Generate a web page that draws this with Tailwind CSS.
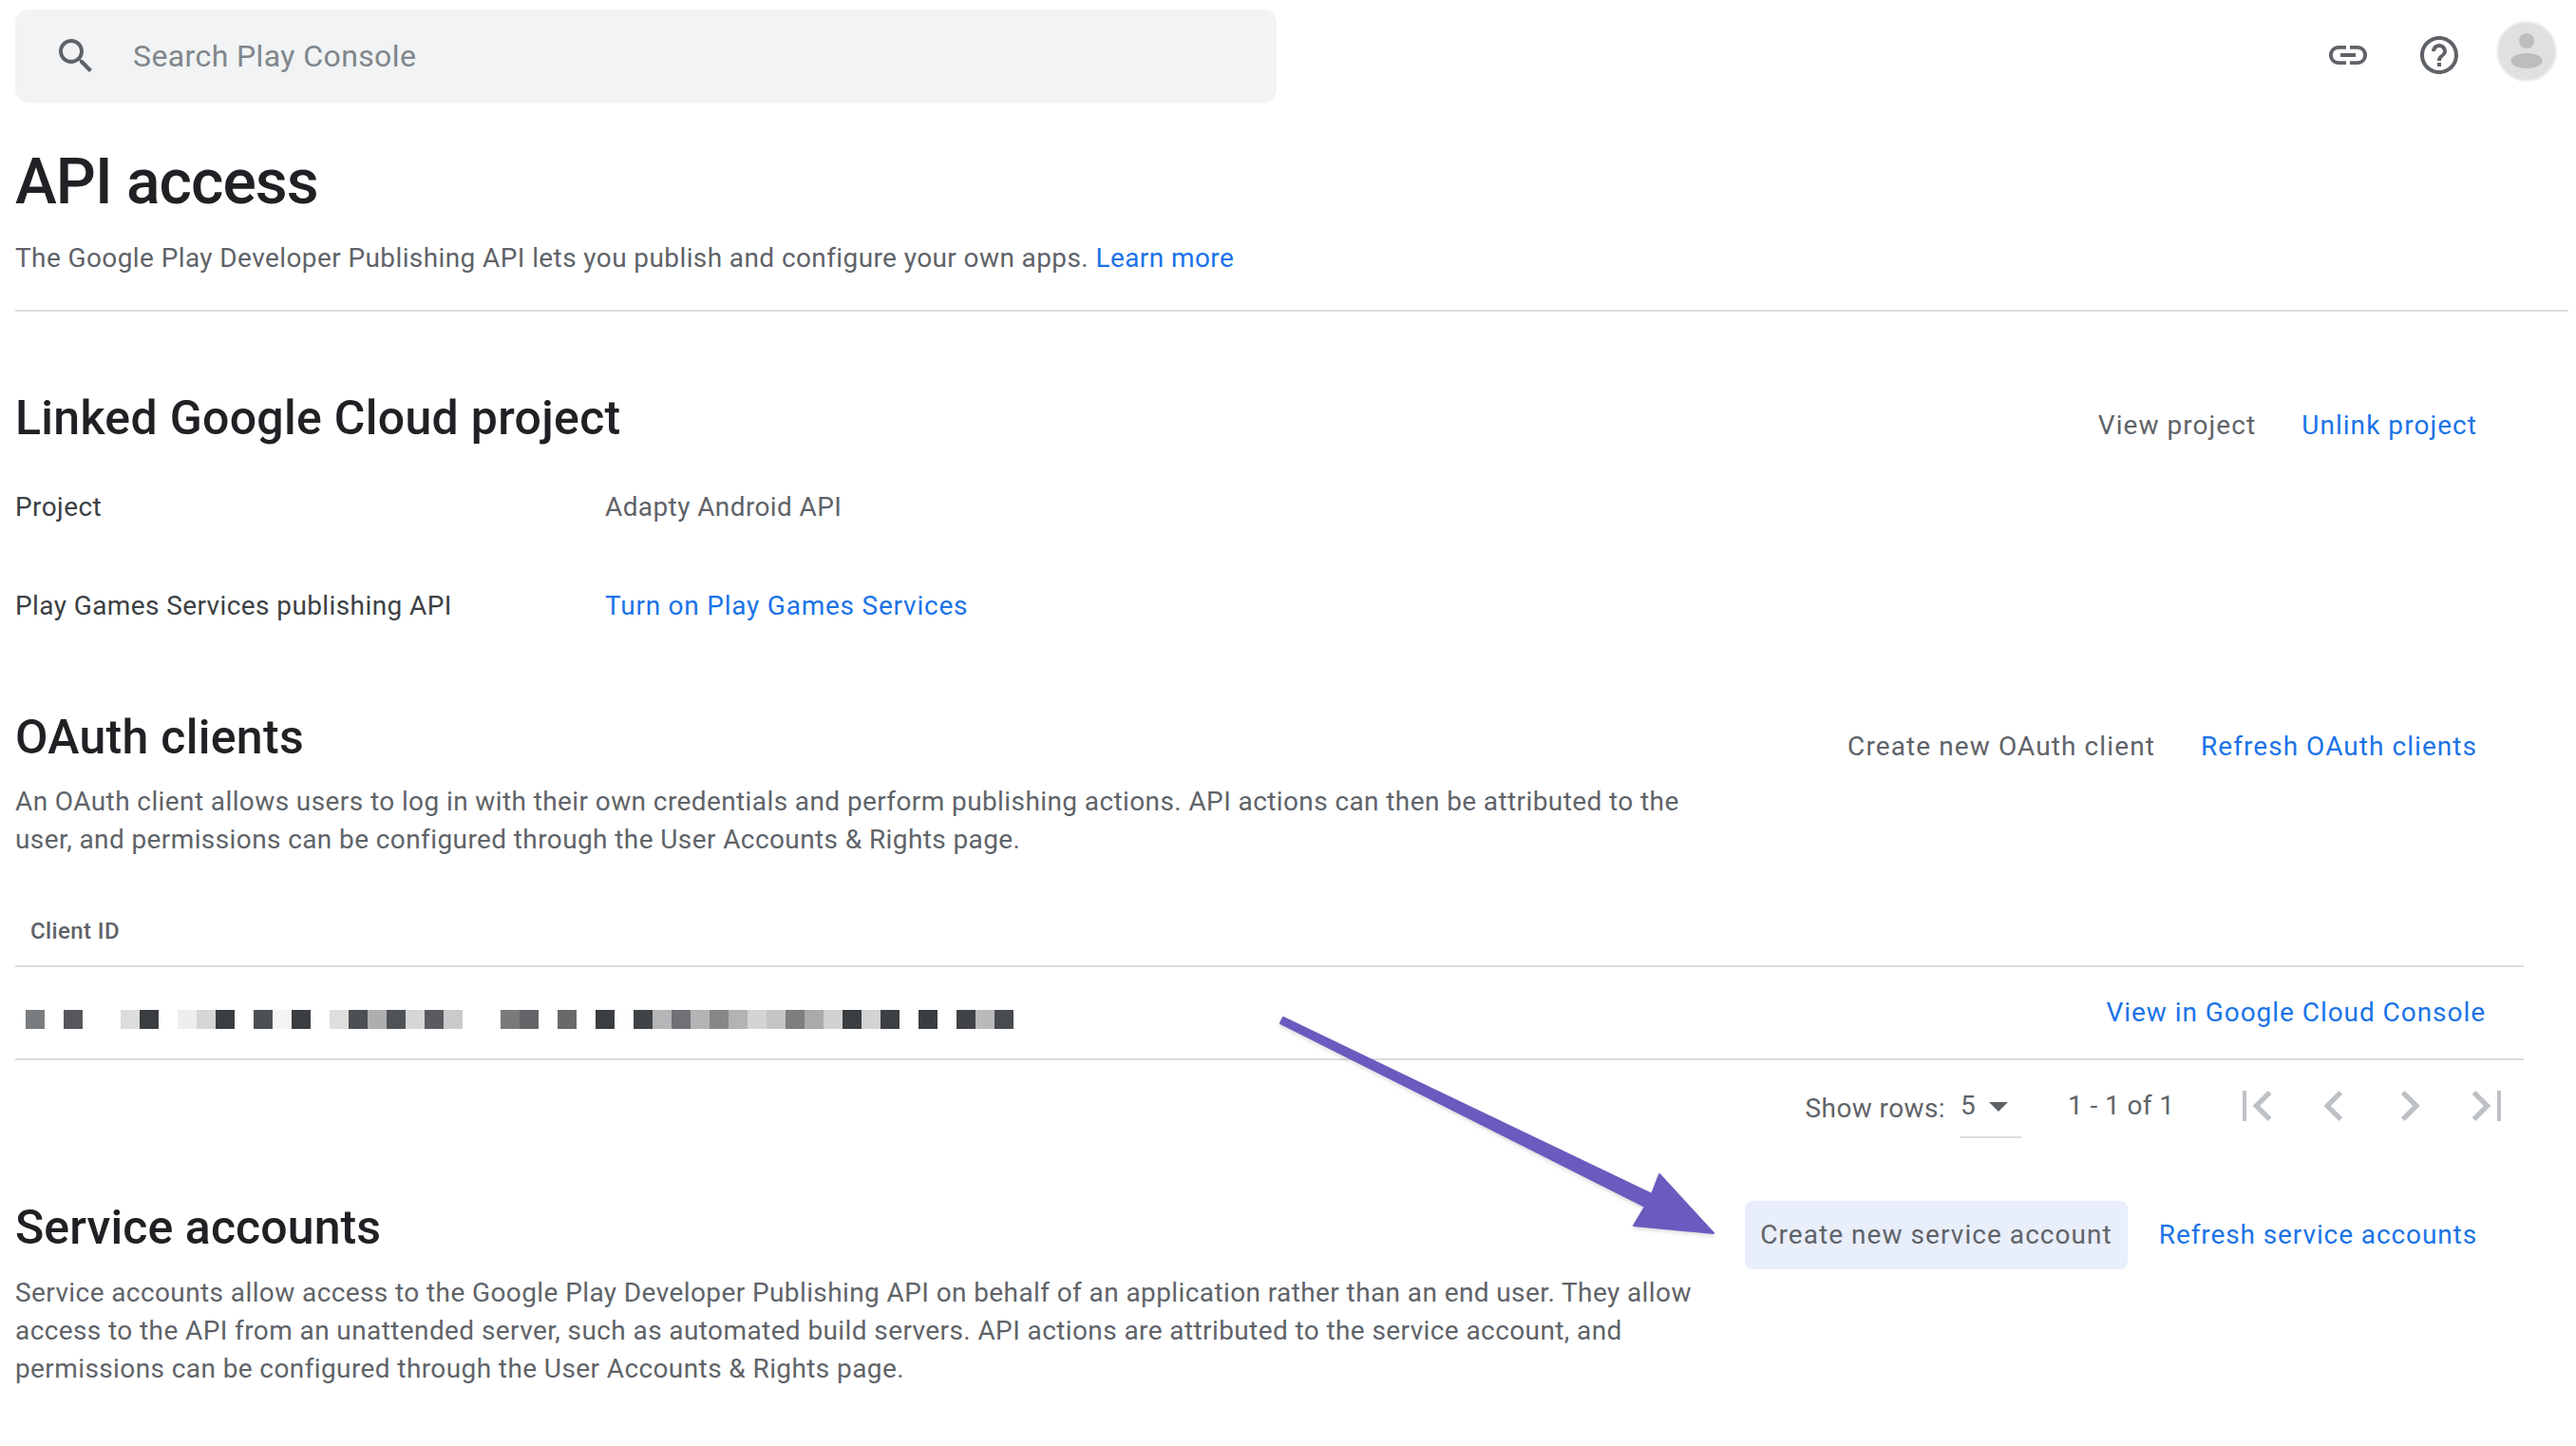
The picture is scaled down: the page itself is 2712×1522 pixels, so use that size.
<!doctype html>
<html lang="en">
<head>
<meta charset="utf-8">
<title>API access</title>
<script src="https://cdn.jsdelivr.net/npm/@tailwindcss/browser@4"></script>
</head>
<body class="bg-white font-['Roboto',sans-serif] text-[28px] tracking-[0.4px] text-[#5f6368]">
<div class="relative w-[2712px] h-[1522px] overflow-hidden pl-4 pr-2">

  <header class="h-[118px] pt-[10px] flex items-start">
    <div class="w-[1328px] h-[98px] rounded-[14px] bg-[#f1f3f4] flex items-center pl-10 gap-9">
      <svg class="w-12 h-12 fill-[#5f6368]" viewBox="0 0 24 24"><path d="M15.5 14h-.79l-.28-.27C15.41 12.59 16 11.11 16 9.5 16 5.91 13.09 3 9.5 3S3 5.91 3 9.5 5.91 16 9.5 16c1.61 0 3.09-.59 4.23-1.57l.27.28v.79l5 4.99L20.49 19l-4.99-5zm-6 0C7.01 14 5 11.99 5 9.5S7.01 5 9.5 5 14 7.01 14 9.5 11.99 14 9.5 14z"/></svg>
      <span class="text-[32px] tracking-[0.4px] text-[#80868b]">Search Play Console</span>
    </div>
    <div class="ml-auto flex items-center pr-[12px] pt-[20px]">
      <svg class="w-12 h-12 fill-[#5f6368]" viewBox="0 0 24 24"><path d="M3.9 12c0-1.71 1.39-3.1 3.1-3.1h4V7H7c-2.76 0-5 2.24-5 5s2.24 5 5 5h4v-1.9H7c-1.71 0-3.1-1.39-3.1-3.1zM8 13h8v-2H8v2zm9-6h-4v1.9h4c1.71 0 3.1 1.39 3.1 3.1s-1.39 3.1-3.1 3.1h-4V17h4c2.76 0 5-2.24 5-5s-2.24-5-5-5z"/></svg>
      <svg class="w-12 h-12 ml-12 fill-[#5f6368]" viewBox="0 0 24 24"><path d="M11 18h2v-2h-2v2zm1-16C6.48 2 2 6.48 2 12s4.48 10 10 10 10-4.48 10-10S17.52 2 12 2zm0 18c-4.41 0-8-3.59-8-8s3.59-8 8-8 8 3.59 8 8-3.59 8-8 8zm0-14c-2.21 0-4 1.79-4 4h2c0-1.1.9-2 2-2s2 .9 2 2c0 2-3 1.75-3 5h2c0-2.25 3-2.5 3-5 0-2.21-1.79-4-4-4z"/></svg>
      <svg class="w-16 h-16 ml-9 -mt-2" viewBox="0 0 64 64"><circle cx="32" cy="32" r="31" fill="#e0e0e0" stroke="#eeeeee" stroke-width="2"/><circle cx="32" cy="21" r="8" fill="#bdbdbd"/><ellipse cx="32" cy="42" rx="16.500" ry="8" fill="#bdbdbd"/></svg>
    </div>
  </header>

  <h1 class="h-[88px] leading-[88px] mt-[30px] text-[66px] font-medium text-[#202124] tracking-[-1px]">API access</h1>
  <p class="h-10 leading-10 mt-[16px] text-[#5f6368]">The Google Play Developer Publishing API lets you publish and configure your own apps. <span class="text-[#1a73e8]">Learn more</span></p>
  <div class="mt-[34px] h-[2px] bg-[#dadce0]"></div>

  <section class="flex items-start justify-between pr-[96px] mt-[79px]">
    <h2 class="h-[66px] leading-[66px] text-[50px] font-medium tracking-[0.3px] text-[#202124]">Linked Google Cloud project</h2>
    <div class="flex gap-12 pt-[21px] leading-10 tracking-[1.05px]"><span>View project</span><span class="text-[#1a73e8]">Unlink project</span></div>
  </section>
  <div class="flex h-10 leading-10 mt-[41px]"><span class="w-[621px] text-[#3c4043]">Project</span><span>Adapty Android API</span></div>
  <div class="flex h-10 leading-10 mt-[64px]"><span class="w-[621px] text-[#3c4043]">Play Games Services publishing API</span><span class="text-[#1a73e8] tracking-[0.77px]">Turn on Play Games Services</span></div>

  <section class="flex items-start justify-between pr-[96px] mt-[85px]">
    <h2 class="h-[66px] leading-[66px] text-[50px] font-medium tracking-[0.3px] text-[#202124]">OAuth clients</h2>
    <div class="flex gap-12 pt-[23px] leading-10 tracking-[1.1px]"><span>Create new OAuth client</span><span class="text-[#1a73e8] tracking-[1.05px]">Refresh OAuth clients</span></div>
  </section>
  <p class="w-[1790px] leading-10 mt-[15px]">An OAuth client allows users to log in with their own credentials and perform publishing actions. API actions can then be attributed to the user, and permissions can be configured through the User Accounts &amp; Rights page.</p>

  <div class="w-[2641px] mt-[55px]">
    <div class="h-[42px] pl-4 flex items-center text-[24px] font-medium text-[#5f6368]">Client ID</div>
    <div class="h-[2px] bg-[#dadce0] mt-[15px]"></div>
    <div class="h-[96px] flex items-start justify-between pl-[11px] pr-[40px] pt-[28px]">
      <div class="flex mt-[17px]">
        <i class="block w-5 h-5 bg-[#7a7d80]"></i><i class="block w-5 h-5"></i><i class="block w-5 h-5 bg-[#57585c]"></i><i class="block w-5 h-5"></i><i class="block w-5 h-5"></i><i class="block w-5 h-5 bg-[#dcdedd]"></i><i class="block w-5 h-5 bg-[#3b3e41]"></i><i class="block w-5 h-5"></i><i class="block w-5 h-5 bg-[#edefee]"></i><i class="block w-5 h-5 bg-[#d4d6d7]"></i><i class="block w-5 h-5 bg-[#3b3e41]"></i><i class="block w-5 h-5"></i><i class="block w-5 h-5 bg-[#4d5053]"></i><i class="block w-5 h-5 bg-[#f4f4f4]"></i><i class="block w-5 h-5 bg-[#3b3e41]"></i><i class="block w-5 h-5"></i><i class="block w-5 h-5 bg-[#dededc]"></i><i class="block w-5 h-5 bg-[#4d5053]"></i><i class="block w-5 h-5 bg-[#adaeb0]"></i><i class="block w-5 h-5 bg-[#4f5356]"></i><i class="block w-5 h-5 bg-[#d5d6d8]"></i><i class="block w-5 h-5 bg-[#5a5b5f]"></i><i class="block w-5 h-5 bg-[#c9cacc]"></i><i class="block w-5 h-5"></i><i class="block w-5 h-5"></i><i class="block w-5 h-5 bg-[#7a7a7c]"></i><i class="block w-5 h-5 bg-[#636467]"></i><i class="block w-5 h-5"></i><i class="block w-5 h-5 bg-[#68696b]"></i><i class="block w-5 h-5"></i><i class="block w-5 h-5 bg-[#3b3e41]"></i><i class="block w-5 h-5"></i><i class="block w-5 h-5 bg-[#404447]"></i><i class="block w-5 h-5 bg-[#b5b6b8]"></i><i class="block w-5 h-5 bg-[#707174]"></i><i class="block w-5 h-5 bg-[#b3b4b6]"></i><i class="block w-5 h-5 bg-[#858789]"></i><i class="block w-5 h-5 bg-[#b2b3b5]"></i><i class="block w-5 h-5 bg-[#d3d5d4]"></i><i class="block w-5 h-5 bg-[#c4c5c7]"></i><i class="block w-5 h-5 bg-[#7d7e80]"></i><i class="block w-5 h-5 bg-[#a9aaac]"></i><i class="block w-5 h-5 bg-[#d0d2d1]"></i><i class="block w-5 h-5 bg-[#3b3e41]"></i><i class="block w-5 h-5 bg-[#d1d3d4]"></i><i class="block w-5 h-5 bg-[#3d4043]"></i><i class="block w-5 h-5"></i><i class="block w-5 h-5 bg-[#3b3e41]"></i><i class="block w-5 h-5"></i><i class="block w-5 h-5 bg-[#404346]"></i><i class="block w-5 h-5 bg-[#b9babc]"></i><i class="block w-5 h-5 bg-[#484b4f]"></i>
      </div>
      <span class="text-[#1a73e8] leading-10 tracking-[0.95px]">View in Google Cloud Console</span>
    </div>
    <div class="h-[2px] bg-[#dadce0]"></div>
    <div class="h-[98px] flex items-center justify-end pr-[8px] pb-[2px]">
      <span class="mt-[6px]">Show rows:</span>
      <div class="ml-4 w-16 h-[68px] border-b-2 border-[#dadce0] flex items-start pt-[14px] leading-10"><span>5</span><svg class="w-5 h-[10px] ml-[14px] mt-[16px] fill-[#5f6368]" viewBox="0 0 20 10"><path d="M0 0h20L10 10z"/></svg></div>
      <span class="ml-[49px] w-[110px] whitespace-nowrap">1 - 1 of 1</span>
      <div class="flex ml-[58px] gap-4 fill-[#bdc1c6]">
        <svg class="w-16 h-16" viewBox="0 0 24 24"><path d="M17.41 16.59L12.82 12l4.59-4.59L16 6l-6 6 6 6zM6 6h1.500v12H6z"/></svg>
        <svg class="w-16 h-16" viewBox="0 0 24 24"><path d="M15.41 7.41L14 6l-6 6 6 6 1.41-1.41L10.83 12z"/></svg>
        <svg class="w-16 h-16" viewBox="0 0 24 24"><path d="M10 6L8.59 7.41 13.17 12l-4.58 4.59L10 18l6-6z"/></svg>
        <svg class="w-16 h-16" viewBox="0 0 24 24"><path d="M6.59 7.41L11.18 12l-4.59 4.59L8 18l6-6-6-6zM16.500 6h1.500v12h-1.500z"/></svg>
      </div>
    </div>
  </div>

  <section class="flex items-start justify-between pr-[96px] mt-[31px]">
    <h2 class="h-[66px] leading-[66px] text-[50px] font-medium tracking-[0.1px] text-[#202124] mt-[14px]">Service accounts</h2>
    <div class="flex items-center gap-[33px] mt-[19px] tracking-[1.05px]">
      <span class="h-[72px] leading-[72px] px-4 rounded-lg bg-[#e8eefa]">Create new service account</span>
      <span class="text-[#1a73e8] tracking-[0.9px]">Refresh service accounts</span>
    </div>
  </section>
  <p class="w-[1790px] leading-10 mt-[5px]">Service accounts allow access to the Google Play Developer Publishing API on behalf of an application rather than an end user. They allow access to the API from an unattended server, such as automated build servers. API actions are attributed to the service account, and permissions can be configured through the User Accounts &amp; Rights page.</p>

  <svg class="absolute left-0 top-0 w-[2712px] h-[1522px] pointer-events-none drop-shadow-[0_2px_2px_rgba(0,0,0,0.15)]" viewBox="0 0 2712 1522">
    <path d="M1351 1071L1348 1077L1732 1270L1720 1290L1804 1298L1747 1236L1739 1257Z" fill="#6a5bbf" stroke="#6a5bbf" stroke-width="2" stroke-linejoin="round"/>
  </svg>
</div>
</body>
</html>
